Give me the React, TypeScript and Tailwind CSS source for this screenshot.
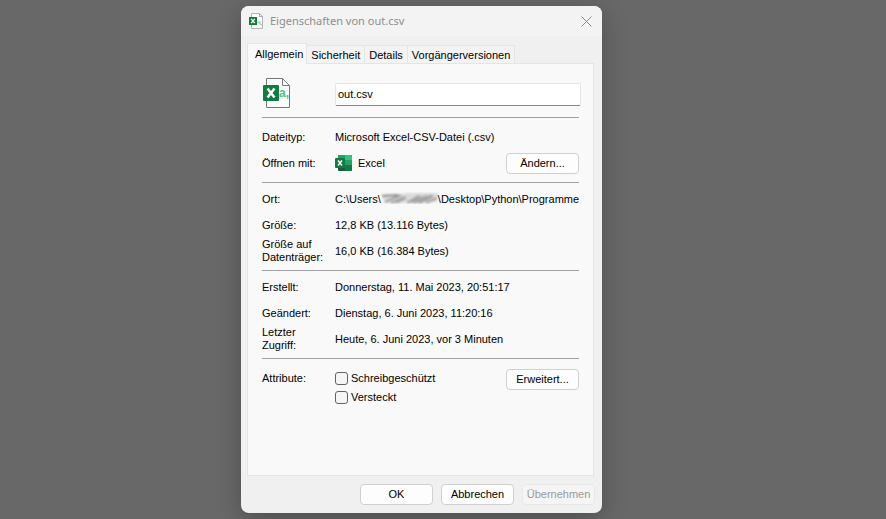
import type { ReactNode } from 'react';

function CsvIcon({ className }: { className: string }) {
  return (
    <svg viewBox="0 0 28 31" className={className} aria-hidden="true">
      <path d="M4.500 .5h16l7 7v22h-23z" fill="#fcfcfc" stroke="#777" />
      <path d="M20.500 .5v7h7" fill="none" stroke="#777" />
      <rect x="1" y="7" width="16" height="16" rx="1" fill="#107c41" />
      <path d="M5.500 10.500l7 9M12.500 10.500l-7 9" stroke="#fff" strokeWidth="2.500" />
      <text x="17" y="19" fontSize="12" fontWeight="700" fontFamily="Liberation Sans, sans-serif" fill="#4cc38a">a,</text>
    </svg>
  );
}

function TitleIcon() {
  return (
    <svg viewBox="0 0 14 16" className="h-4 w-3.5" aria-hidden="true">
      <path d="M2.500 .5h8l3 3v12h-11z" fill="#fcfcfc" stroke="#b4b4b4" />
      <path d="M10.500 .5v3h3" fill="none" stroke="#a8a8a8" />
      <path d="M9 10.500v-1.500h2v2l2 1" fill="none" stroke="#7fdcae" strokeWidth="1.200" />
      <rect x="0" y="4" width="8" height="8" fill="#107c41" />
      <path d="M2.200 5.800l3.600 4.400M5.800 5.800l-3.600 4.400" stroke="#fff" strokeWidth="1.300" />
    </svg>
  );
}

function ExcelIcon() {
  return (
    <svg viewBox="0 0 17 16" className="h-4 w-[17px]" aria-hidden="true">
      <rect x="3" y="0" width="14" height="16" rx="1" fill="#185c37" />
      <path d="M4 0h6v5H3V1z" fill="#21a366" />
      <path d="M10 0h6l1 1v4h-7z" fill="#33c481" />
      <path d="M3 5h7v5H3z" fill="#107c41" />
      <path d="M10 5h7v5h-7z" fill="#21a366" />
      <path d="M10 10h7v5l-1 1h-6z" fill="#107c41" />
      <rect x="0" y="3" width="10" height="10" rx="1" fill="#107c41" />
      <path d="M3 5.500l4 5M7 5.500l-4 5" stroke="#fff" strokeWidth="1.500" />
    </svg>
  );
}

function DialogButton({ children, disabled = false }: { children: ReactNode; disabled?: boolean }) {
  return (
    <button
      type="button"
      disabled={disabled}
      className="h-[21px] w-[73px] shrink-0 whitespace-nowrap rounded border border-[#d0d0d0] bg-[#fdfdfd] text-center text-black disabled:border-[#e8e8e8] disabled:bg-[#f5f5f5] disabled:text-[#9a9a9a]"
    >
      {children}
    </button>
  );
}

function Row({ label, children }: { label: ReactNode; children: ReactNode }) {
  return (
    <div className="flex h-[26px] items-center">
      <dt className="w-[73px] shrink-0">{label}</dt>
      <dd className="flex min-w-0 grow items-center whitespace-nowrap">{children}</dd>
    </div>
  );
}

function RedactedName() {
  return (
    <svg viewBox="0 0 57 14" className="h-3.5 w-[57px] shrink-0" aria-hidden="true">
      <defs>
        <filter id="smear" x="-5%" y="-10%" width="110%" height="120%">
          <feGaussianBlur stdDeviation="1" />
        </filter>
      </defs>
      <g filter="url(#smear)">
        <path d="M0 2h22l4-1h31l-1 9H28l-10 1H4z" fill="#dadada" />
        <path d="M1 4l16-1M4 10l16-7M10 11l14-6M26 11l12-7M33 11l13-7M39 11l13-7M45 11l11-5" stroke="#8f8f8f" strokeWidth="1.800" />
        <path d="M15 11l10-5M30 11l11-7M37 11l13-8" stroke="#adadad" strokeWidth="2" />
      </g>
    </svg>
  );
}

function Attribute({ children }: { children: ReactNode }) {
  return (
    <label className="flex h-[19px] items-center gap-[3px]">
      <input
        type="checkbox"
        className="size-[13px] appearance-none rounded-[3px] border border-[#626262] bg-[#f5f5f5] checked:bg-[#107c41]"
      />
      {children}
    </label>
  );
}

const tabs = ['Sicherheit', 'Details', 'Vorgängerversionen'];

export default function App() {
  return (
    <div className="flex min-h-screen items-center justify-center bg-[#686868] py-1.5 pr-[43px] font-['Liberation_Sans',Arial,sans-serif] text-[11px] leading-[13px] text-black">
      <main className="flex w-full max-w-[361px] flex-col overflow-hidden rounded-lg bg-[#f0f0f0] shadow-[0_6px_24px_rgba(0,0,0,0.25)]">
        <header className="flex h-[30px] items-center bg-[#f3f3f3] pl-2 pr-2.5">
          <TitleIcon />
          <h1 className="ml-[7px] grow font-['Noto_Sans',sans-serif] text-[11px] leading-4 text-[#8e8e8e]">
            Eigenschaften von out.csv
          </h1>
          <button type="button" aria-label="Schließen" className="text-[#8a8a8a]">
            <svg viewBox="0 0 11 11" className="size-[11px]" aria-hidden="true">
              <path d="M.5 .5l10 10M10.500 .5l-10 10" stroke="currentColor" />
            </svg>
          </button>
        </header>

        <div className="flex flex-col pl-1.5 pr-2 pt-[7px]">
          <div role="tablist" className="flex items-end">
            <button
              type="button"
              role="tab"
              aria-selected="true"
              className="z-10 -mb-px h-[21px] border border-b-0 border-[#e5e5e5] bg-[#f9f9f9] pl-[7px] pr-[3px]"
            >
              Allgemein
            </button>
            {tabs.map((tab) => (
              <button
                key={tab}
                type="button"
                role="tab"
                aria-selected="false"
                className="h-[18px] border border-b-0 border-l-0 border-[#e5e5e5] bg-[#f3f3f3] px-1 pt-px"
              >
                {tab}
              </button>
            ))}
          </div>

          <section role="tabpanel" className="h-[413px] border border-[#e5e5e5] bg-[#f9f9f9] px-3.5 pt-3.5">
            <div className="flex h-10 items-start border-b border-[#a0a0a0]">
              <div className="w-[73px] shrink-0">
                <CsvIcon className="h-[31px] w-7" />
              </div>
              <input
                type="text"
                aria-label="Dateiname"
                defaultValue="out.csv"
                className="-mr-0.5 mt-[5px] h-[23px] min-w-0 grow rounded-xs border border-[#e5e5e5] border-b-[#868686] bg-white px-0.5 pb-0.5 outline-none"
              />
            </div>

            <dl className="border-b border-[#a0a0a0] py-1.5">
              <Row label="Dateityp:">Microsoft Excel-CSV-Datei (.csv)</Row>
              <Row label="Öffnen mit:">
                <ExcelIcon />
                <span className="ml-1.5 grow">Excel</span>
                <DialogButton>Ändern...</DialogButton>
              </Row>
            </dl>

            <dl className="border-b border-[#a0a0a0] pb-1.5 pt-[3px]">
              <Row label="Ort:">
                <span>C:\Users\</span>
                <RedactedName />
                <span>\Desktop\Python\Programme</span>
              </Row>
              <Row label="Größe:">12,8 KB (13.116 Bytes)</Row>
              <Row label={<>Größe auf<br />Datenträger:</>}>16,0 KB (16.384 Bytes)</Row>
            </dl>

            <dl className="border-b border-[#a0a0a0] pb-1.5 pt-[3px]">
              <Row label="Erstellt:">Donnerstag, 11. Mai 2023, 20:51:17</Row>
              <Row label="Geändert:">Dienstag, 6. Juni 2023, 11:20:16</Row>
              <Row label={<>Letzter<br />Zugriff:</>}>Heute, 6. Juni 2023, vor 3 Minuten</Row>
            </dl>

            <div role="group" aria-labelledby="attributes" className="flex items-start pt-2.5">
              <span id="attributes" className="w-[73px] shrink-0 pt-[3px]">Attribute:</span>
              <div className="grow">
                <Attribute>Schreibgeschützt</Attribute>
                <Attribute>Versteckt</Attribute>
              </div>
              <DialogButton>Erweitert...</DialogButton>
            </div>
          </section>
        </div>

        <footer className="flex justify-end gap-2 pb-2 pr-[7px] pt-2">
          <DialogButton>OK</DialogButton>
          <DialogButton>Abbrechen</DialogButton>
          <DialogButton disabled>Übernehmen</DialogButton>
        </footer>
      </main>
    </div>
  );
}
